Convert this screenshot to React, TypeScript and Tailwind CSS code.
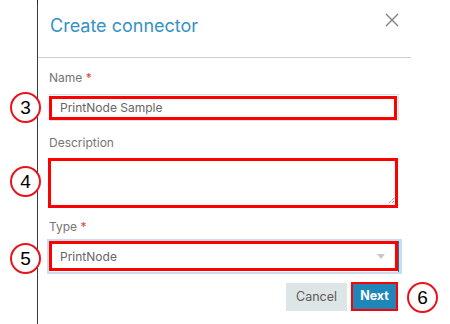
import React from "react";

const Circle = ({ n, x, y }: { n: string; x: number; y: number }) => (
  <div
    className="absolute w-[31px] h-[31px] rounded-full border-2 border-[#e8141b] bg-white flex items-center justify-center text-[19px] text-black leading-none"
    style={{ left: x, top: y, fontFamily: '"Liberation Sans", Arial, sans-serif' }}
  >
    {n}
  </div>
);

export default function App() {
  const font = { fontFamily: 'Inter, "Liberation Sans", sans-serif' };
  return (
    <div className="relative w-[450px] h-[324px] bg-white overflow-hidden flex" style={font}>
      <div className="w-[37px] shrink-0" />
      <div className="w-[1px] shrink-0 bg-[#3d3d3d] flex flex-col">
        <div className="h-[5px] bg-[#1d2b3a]" />
      </div>
      <div className="w-[373px] flex flex-col">
        <div className="h-[57px] border-b border-[#cfcfcf] flex items-center justify-between pl-[12px] pr-[12px] box-content">
          <div className="text-[18px] text-[#3592c6] leading-none -mt-[5px]">Create connector</div>
          <svg width="14" height="14" viewBox="0 0 14 14" className="-mt-[18px] mr-[0px]">
            <path d="M1 1 L13 13 M13 1 L1 13" stroke="#808080" strokeWidth="1.4" />
          </svg>
        </div>
        <div className="flex flex-col pl-[11px] pr-[12px] pt-[12px]">
          <div className="text-[12px] leading-[16px] text-[#757575]">
            Name <span className="text-[#e0443c]">*</span>
          </div>
          <div className="relative mt-[8px] h-[27px] w-[350px] border border-[#dfe3e5] flex items-center pl-[10px] text-[12px] text-[#666]">
            PrintNode Sample
            <div className="absolute left-[-1px] top-[1px] right-[1px] bottom-0 border-[3px] border-[#ff0000]" />
          </div>
          <div className="mt-[14px] text-[12px] leading-[16px] text-[#757575]">Description</div>
          <div className="relative mt-[6px] h-[51px] w-[350px] -ml-[1px]">
            <div className="ml-[1px] mt-[1px] w-[347px] h-[48px] border border-[#dcdcdc]" />
            <svg width="7" height="7" viewBox="0 0 7 7" className="absolute left-[340px] top-[40px]">
              <path d="M6 1 L1 6 M6 4 L4 6" stroke="#777" strokeWidth="1" strokeDasharray="1 1" />
            </svg>
            <div className="absolute left-0 top-[1px] right-0 bottom-0 border-[3px] border-[#ff0000]" />
          </div>
          <div className="mt-[11px] text-[12px] leading-[16px] text-[#757575]">
            Type <span className="text-[#e0443c]">*</span>
          </div>
          <div className="mt-[4px] -ml-[2px] w-[355px] h-[35px] bg-[#c7deee] p-[2px]">
            <div className="relative h-[31px] w-[350px] bg-white flex items-center justify-between pl-[11px] pr-[13px] text-[12px] text-[#666] border-r border-[#2a6e99]">
              PrintNode
              <svg width="8" height="5" viewBox="0 0 8 5">
                <path d="M0 0 L8 0 L4 5 Z" fill="#c8c8c8" />
              </svg>
              <div className="absolute left-0 top-0 right-0 bottom-[1px] border-[3px] border-[#ff0000]" />
            </div>
          </div>
          <div className="mt-[9px] flex justify-end gap-[4px] mr-[1px]">
            <div className="w-[61px] h-[28px] bg-[#dee5e7] flex items-center justify-center text-[12.5px] text-[#5a5a5a]">
              Cancel
            </div>
            <div className="relative w-[47px] h-[29px] bg-[#1f86b9] flex items-center justify-center text-[12.5px] font-bold text-white -mt-[1px]">
              Next
              <div className="absolute inset-0 border-[2px] border-[#ff0000]" />
            </div>
          </div>
        </div>
      </div>
      <Circle n="3" x={10} y={92} />
      <Circle n="4" x={10} y={166} />
      <Circle n="5" x={10} y={243} />
      <Circle n="6" x={407} y={282} />
    </div>
  );
}
